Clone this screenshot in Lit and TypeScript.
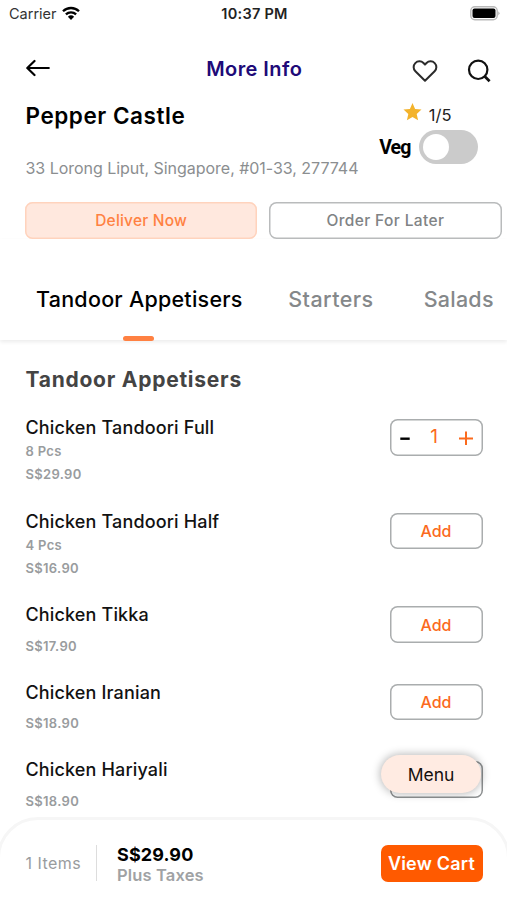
import { LitElement, html, css, svg, nothing } from "lit";
import { customElement, property } from "lit/decorators.js";

interface Dish {
  name: string;
  note?: string;
  price: string;
  qty: number;
  covered?: boolean;
}

const dishes: Dish[] = [
  { name: "Chicken Tandoori Full", note: "8 Pcs", price: "S$29.90", qty: 1 },
  { name: "Chicken Tandoori Half", note: "4 Pcs", price: "S$16.90", qty: 0 },
  { name: "Chicken Tikka", price: "S$17.90", qty: 0 },
  { name: "Chicken Iranian", price: "S$18.90", qty: 0 },
  { name: "Chicken Hariyali", price: "S$18.90", qty: 0, covered: true },
];

@customElement("dish-row")
class DishRow extends LitElement {
  @property({ attribute: false }) dish!: Dish;

  static styles = css`
    :host { display: block; }
    .row { display: flex; justify-content: space-between; align-items: flex-start; padding: 0 24.5px 0 25.5px; height: 77.4px; box-sizing: border-box; }
    .tall { height: 93.7px; }
    .name { font-size: 18px; font-weight: 500; line-height: 24px; letter-spacing: 0.15px; color: #121212; }
    .note, .price { font-size: 13px; font-weight: 600; letter-spacing: 0.32px; line-height: 18px; color: #999c9e; white-space: nowrap; }
    .note { margin-top: 2px; }
    .price { margin-top: 9.5px; }
    .note + .price { margin-top: 5.2px; }
    .btn { width: 93px; height: 36.5px; margin-top: 3px; box-sizing: border-box; box-shadow: inset 0 0 0 1.5px #aaadae; border-radius: 7.5px; display: flex; align-items: center; justify-content: center; color: #fb6a1d; background: #fff; }
    .add { font-size: 16px; font-weight: 500; }
    .covered { box-shadow: inset 0 0 0 1.5px #8e9192; }
    .stepper { justify-content: space-between; padding: 0 8px 0 10px; }
    .qty { font-size: 19px; line-height: 20px; }
  `;

  render() {
    const d = this.dish;
    return html`<div class="row ${d.note ? "tall" : ""}">
      <div>
        <div class="name">${d.name}</div>
        ${d.note ? html`<div class="note">${d.note}</div>` : nothing}
        <div class="price">${d.price}</div>
      </div>
      ${d.qty
        ? html`<div class="btn stepper">
            <svg width="10" height="16" viewBox="0 0 10 16"><path d="M.3 9.700h9.400" stroke="#000" stroke-width="2.4" /></svg>
            <span class="qty">${d.qty}</span>
            <svg width="16" height="16" viewBox="0 0 16 16"><path d="M1 9.500h14M8 2.500v14" stroke="#fb6a1d" stroke-width="2" /></svg>
          </div>`
        : d.covered
          ? html`<div class="btn covered"></div>`
          : html`<div class="btn add">Add</div>`}
    </div>`;
  }
}

const wifi = svg`<g fill="none" stroke="#000" stroke-width="2.3"><path d="M1 5.300a11.400 11.400 0 0 1 16 0"/><path d="M3.900 8.400a7.300 7.300 0 0 1 10.200 0"/></g><path d="M9 14 5.900 10.700a4.500 4.500 0 0 1 6.200 0z"/>`;

@customElement("app-root")
class AppRoot extends LitElement {
  static styles = css`
    :host { display: block; position: relative; width: 507px; height: 900px; overflow: hidden; background: #fff; font-family: Inter, "Liberation Sans", sans-serif; color: #000; white-space: nowrap; }
    svg { display: block; }
    .status { display: grid; grid-template-columns: 1fr auto 1fr; align-items: center; height: 27px; padding: 0 7px 0 9px; box-sizing: border-box; }
    .carrier { display: flex; align-items: center; gap: 5px; font-size: 14.5px; color: #333; }
    .carrier svg { margin-top: -1px; }
    .time { font-size: 14.5px; font-weight: 600; letter-spacing: 0.25px; color: #222; }
    .battery { justify-self: end; }
    .nav { display: grid; grid-template-columns: 1fr auto 1fr; align-items: center; height: 68px; margin-top: 7px; padding: 0 16px 0 26px; }
    .title { font-size: 20px; font-weight: 600; letter-spacing: 0.42px; color: #200a78; margin: 2px 8.5px 0 0; }
    .tools { justify-self: end; display: flex; gap: 29px; align-items: center; padding-top: 5px; }
    .info { display: flex; justify-content: space-between; height: 100px; padding: 0 29.5px 0 25.5px; }
    .shop { font-size: 22.5px; font-weight: 600; letter-spacing: 0.55px; line-height: 28px; }
    .address { font-size: 16px; line-height: 20px; letter-spacing: -0.03px; margin-top: 28px; color: #8b8e90; }
    .side { display: flex; flex-direction: column; align-items: flex-end; }
    .rating { display: flex; gap: 6px; height: 27px; padding-right: 26px; }
    .rating svg { margin-right: 1px; }
    .score { font-size: 16.5px; line-height: 27px; color: #222; }
    .veg { display: flex; align-items: center; gap: 8.5px; height: 36px; }
    .veglabel { font-family: Roboto, sans-serif; font-size: 19.5px; font-weight: 700; letter-spacing: -0.9px; }
    .switch { width: 58.5px; height: 34px; box-sizing: border-box; padding: 4px; border-radius: 17px; background: #cbcbcb; }
    .knob { width: 26px; height: 26px; border-radius: 50%; background: #fff; }
    .modes { display: flex; gap: 12px; padding: 0 5.5px 0 25px; }
    .mode { flex: 1; height: 37px; box-sizing: border-box; box-shadow: inset 0 0 0 1.5px #b9bbbc; border-radius: 7.5px; display: flex; align-items: center; justify-content: center; font-size: 15.5px; font-weight: 500; letter-spacing: 0.38px; color: #808385; }
    .mode.on { background: #ffe8de; box-shadow: inset 0 0 0 1.5px #ffd3bd; color: #ff8142; letter-spacing: 0.2px; }
    .tabs { display: flex; height: 101px; gap: 45.5px; padding-left: 36px; box-shadow: 0 2px 4px rgba(0,0,0,0.08); }
    .tab { font-size: 21.5px; line-height: 28px; padding-top: 46px; font-weight: 500; letter-spacing: 0.45px; color: #85888a; position: relative; }
    .tab:last-child { margin-left: 4.5px; letter-spacing: 0.25px; }
    .tab.on { color: #000; letter-spacing: 0.25px; }
    .tab.on::after { content: ""; position: absolute; left: 87px; bottom: -1px; width: 31px; height: 5.5px; border-radius: 2.5px; background: #ff8142; }
    .section { font-size: 21px; font-weight: 700; letter-spacing: 0.75px; line-height: 28px; color: #444; padding: 26px 25.5px 0; height: 76px; box-sizing: border-box; }
    .menu { position: absolute; left: 381px; top: 755px; width: 100px; height: 38px; border-radius: 19px; background: #ffebe2; box-shadow: 0 0 9px 1px rgba(0,0,0,0.28); display: flex; align-items: center; justify-content: center; font-size: 17.5px; color: #15100e; }
    .cart { position: absolute; left: -3px; right: -3px; top: 817px; height: 90px; box-sizing: border-box; border: 3px solid #f6f6f6; border-radius: 41px 41px 0 0; background: #fff; display: flex; padding: 25px 24.5px 0 25.5px; }
    .items { width: 71.5px; box-sizing: border-box; height: 36px; border-right: 1.5px solid #ddd; font-size: 16px; letter-spacing: 0.45px; line-height: 37px; color: #999c9e; }
    .total { margin-left: 20px; flex: 1; }
    .sum { font-size: 18px; font-weight: 700; letter-spacing: 0.1px; line-height: 20px; }
    .tax { font-size: 16.5px; font-weight: 600; letter-spacing: 0.15px; line-height: 21px; color: #a0a2a4; }
    .view { width: 102px; height: 37px; border-radius: 7px; background: #ff5a00; color: #fff; font-size: 18px; font-weight: 600; letter-spacing: 0.22px; display: flex; align-items: center; justify-content: center; }
  `;

  render() {
    return html`
      <div class="status">
        <div class="carrier">Carrier<svg width="18" height="15" viewBox="0 0 18 15">${wifi}</svg></div>
        <div class="time">10:37 PM</div>
        <svg class="battery" width="30" height="15" viewBox="0 0 30 15">
          <rect x=".8" y=".8" width="26.4" height="13" rx="4" fill="#fff" stroke="#b9b9b9" stroke-width="1.4" />
          <rect x="2.5" y="2.5" width="23" height="9.6" rx="2" /><path d="M28.300 5.200q2.400 2.100 0 4.200z" fill="#b0b0b0" />
        </svg>
      </div>
      <div class="nav">
        <svg width="25" height="18" viewBox="0 0 25 18" fill="none" stroke="#000" stroke-width="2.2" stroke-linecap="round" stroke-linejoin="round"><path d="M8.500 2 1.300 9l7.200 7M1.500 9h21.300" /></svg>
        <div class="title">More Info</div>
        <div class="tools">
          <svg width="26" height="24" viewBox="0 0 26 24" fill="none" stroke="#2b2b2b" stroke-width="2" stroke-linejoin="round"><path d="M13 21.800 3.400 12.300A5.700 5.700 0 0 1 11.500 4L13 5.600 14.500 4a5.700 5.700 0 0 1 8.100 8.300z" /></svg>
          <svg width="24" height="24" viewBox="0 0 24 24" fill="none" stroke="#111" stroke-width="2.2"><circle cx="11.200" cy="10.800" r="9.200" /><path d="m17.600 17.200 5 5" stroke-width="2.700" /></svg>
        </div>
      </div>
      <div class="info">
        <div><div class="shop">Pepper Castle</div><div class="address">33 Lorong Liput, Singapore, #01-33, 277744</div></div>
        <div class="side">
          <div class="rating">
            <svg width="19" height="20" viewBox="0 0 19 20"><path fill="#f3b32c" d="m9.500 1 2.600 6 6.400.600-4.800 4.300 1.400 6.400-5.600-3.300-5.600 3.300 1.400-6.400L.500 7.600l6.400-.600z" /></svg>
            <span class="score">1/5</span>
          </div>
          <div class="veg"><span class="veglabel">Veg</span><div class="switch"><div class="knob"></div></div></div>
        </div>
      </div>
      <div class="modes"><div class="mode on">Deliver Now</div><div class="mode">Order For Later</div></div>
      <div class="tabs"><div class="tab on">Tandoor Appetisers</div><div class="tab">Starters</div><div class="tab">Salads</div></div>
      <div class="section">Tandoor Appetisers</div>
      ${dishes.map((d) => html`<dish-row .dish=${d}></dish-row>`)}
      <div class="menu">Menu</div>
      <div class="cart">
        <div class="items">1 Items</div>
        <div class="total"><div class="sum">S$29.90</div><div class="tax">Plus Taxes</div></div>
        <div class="view">View Cart</div>
      </div>
    `;
  }
}
